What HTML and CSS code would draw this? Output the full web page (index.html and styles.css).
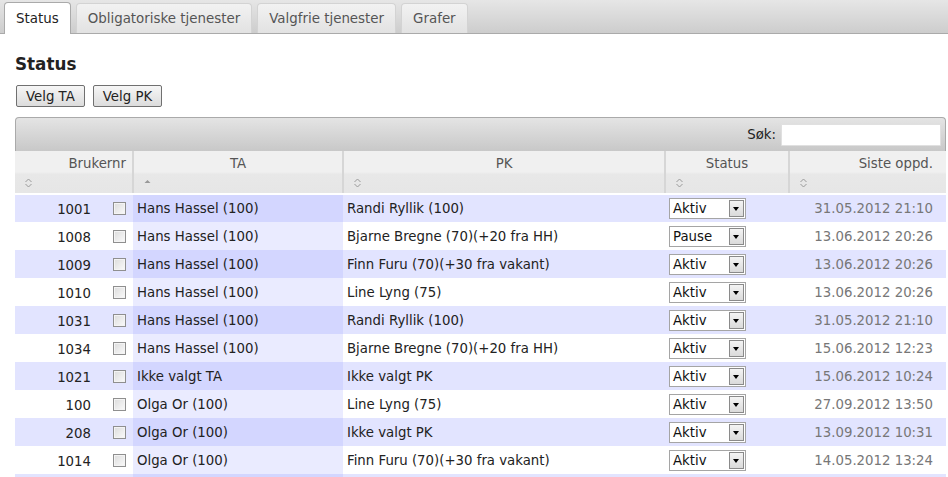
FILE: index.html
```html
<!DOCTYPE html>
<html>
<head>
<meta charset="utf-8">
<link rel="stylesheet" href="styles.css">
</head>
<body>
<div class="tabbar">
  <div class="tab active">Status</div>
  <div class="tab">Obligatoriske tjenester</div>
  <div class="tab">Valgfrie tjenester</div>
  <div class="tab">Grafer</div>
</div>
<div class="content">
  <h2 class="title">Status</h2>
  <div class="buttons">
    <button class="btn">Velg TA</button>
    <button class="btn">Velg PK</button>
  </div>
  <div class="toolbar">
    <label class="search">Søk: <span class="search-input"></span></label>
  </div>
  <table class="grid">
    <colgroup>
      <col class="c1"><col class="c2"><col class="c3"><col class="c4"><col class="c5">
    </colgroup>
    <thead>
      <tr>
        <th class="right"><div class="lbl">Brukernr</div><div class="ico"><svg width="7" height="10" viewBox="0 0 7 10"><path d="M0.5 4 L3.5 1 L6.5 4 M0.5 6 L3.5 9 L6.5 6" fill="none" stroke="#999" stroke-width="1"/></svg></div></th>
        <th class="center"><div class="lbl">TA</div><div class="ico"><svg width="7" height="10" viewBox="0 0 7 10"><path d="M0.5 5 L3.5 2 L6.5 5 Z" fill="#999"/></svg></div></th>
        <th class="center"><div class="lbl">PK</div><div class="ico"><svg width="7" height="10" viewBox="0 0 7 10"><path d="M0.5 4 L3.5 1 L6.5 4 M0.5 6 L3.5 9 L6.5 6" fill="none" stroke="#999" stroke-width="1"/></svg></div></th>
        <th class="center"><div class="lbl">Status</div><div class="ico"><svg width="7" height="10" viewBox="0 0 7 10"><path d="M0.5 4 L3.5 1 L6.5 4 M0.5 6 L3.5 9 L6.5 6" fill="none" stroke="#999" stroke-width="1"/></svg></div></th>
        <th class="right last"><div class="lbl">Siste oppd.</div><div class="ico"><svg width="7" height="10" viewBox="0 0 7 10"><path d="M0.5 4 L3.5 1 L6.5 4 M0.5 6 L3.5 9 L6.5 6" fill="none" stroke="#999" stroke-width="1"/></svg></div></th>
      </tr>
    </thead>
    <tbody>
      <tr class="odd"><td class="num"><span>1001</span><i class="cb"></i></td><td class="sorted">Hans Hassel (100)</td><td>Randi Ryllik (100)</td><td><span class="sel">Aktiv<b class="arr"></b></span></td><td class="date">31.05.2012 21:10</td></tr>
      <tr class="even"><td class="num"><span>1008</span><i class="cb"></i></td><td class="sorted">Hans Hassel (100)</td><td>Bjarne Bregne (70)(+20 fra HH)</td><td><span class="sel">Pause<b class="arr"></b></span></td><td class="date">13.06.2012 20:26</td></tr>
      <tr class="odd"><td class="num"><span>1009</span><i class="cb"></i></td><td class="sorted">Hans Hassel (100)</td><td>Finn Furu (70)(+30 fra vakant)</td><td><span class="sel">Aktiv<b class="arr"></b></span></td><td class="date">13.06.2012 20:26</td></tr>
      <tr class="even"><td class="num"><span>1010</span><i class="cb"></i></td><td class="sorted">Hans Hassel (100)</td><td>Line Lyng (75)</td><td><span class="sel">Aktiv<b class="arr"></b></span></td><td class="date">13.06.2012 20:26</td></tr>
      <tr class="odd"><td class="num"><span>1031</span><i class="cb"></i></td><td class="sorted">Hans Hassel (100)</td><td>Randi Ryllik (100)</td><td><span class="sel">Aktiv<b class="arr"></b></span></td><td class="date">31.05.2012 21:10</td></tr>
      <tr class="even"><td class="num"><span>1034</span><i class="cb"></i></td><td class="sorted">Hans Hassel (100)</td><td>Bjarne Bregne (70)(+20 fra HH)</td><td><span class="sel">Aktiv<b class="arr"></b></span></td><td class="date">15.06.2012 12:23</td></tr>
      <tr class="odd"><td class="num"><span>1021</span><i class="cb"></i></td><td class="sorted">Ikke valgt TA</td><td>Ikke valgt PK</td><td><span class="sel">Aktiv<b class="arr"></b></span></td><td class="date">15.06.2012 10:24</td></tr>
      <tr class="even"><td class="num"><span>100</span><i class="cb"></i></td><td class="sorted">Olga Or (100)</td><td>Line Lyng (75)</td><td><span class="sel">Aktiv<b class="arr"></b></span></td><td class="date">27.09.2012 13:50</td></tr>
      <tr class="odd"><td class="num"><span>208</span><i class="cb"></i></td><td class="sorted">Olga Or (100)</td><td>Ikke valgt PK</td><td><span class="sel">Aktiv<b class="arr"></b></span></td><td class="date">13.09.2012 10:31</td></tr>
      <tr class="even"><td class="num"><span>1014</span><i class="cb"></i></td><td class="sorted">Olga Or (100)</td><td>Finn Furu (70)(+30 fra vakant)</td><td><span class="sel">Aktiv<b class="arr"></b></span></td><td class="date">14.05.2012 13:24</td></tr>
      <tr class="odd"><td class="num"><span></span></td><td class="sorted"></td><td></td><td></td><td class="date"></td></tr>
    </tbody>
  </table>
</div>
</body>
</html>
```

FILE: styles.css
```css
html, body {
  margin: 0;
  padding: 0;
  background: #fff;
  font-family: "DejaVu Sans", Verdana, sans-serif;
  font-size: 13.3px;
  color: #222;
  overflow: hidden;
}

.tabbar {
  height: 34px;
  box-sizing: border-box;
  background: linear-gradient(#e6e6e6, #cdcdcd);
  border-bottom: 1px solid #aaa;
  display: flex;
  align-items: flex-end;
  padding-left: 4px;
  gap: 5px;
}

.tab {
  height: 30px;
  box-sizing: border-box;
  padding: 0 11px;
  display: flex;
  align-items: center;
  font-size: 13.4px;
  color: #555;
  background: linear-gradient(#f2f2f2, #e2e2e2);
  border: 1px solid #d3d3d3;
  border-bottom: none;
  border-radius: 4px 4px 0 0;
  margin-bottom: 0;
}

.tab.active {
  height: 32px;
  margin-bottom: -1px;
  background: #fff;
  color: #222;
  border-color: #aaa;
}

.content {
  padding: 0 2px 0 15px;
}

.title {
  margin: 20px 0 0 0;
  font-size: 16.8px;
  font-weight: bold;
  color: #222;
  height: 21px;
  line-height: 21px;
}

.buttons {
  display: flex;
  gap: 8px;
  margin-top: 10px;
  padding-left: 1px;
}

.btn {
  height: 22px;
  padding: 0 9px;
  font-family: "DejaVu Sans", Verdana, sans-serif;
  font-size: 13.3px;
  color: #222;
  background: linear-gradient(#f6f6f6, #dcdcdc);
  border: 1px solid #707070;
  border-radius: 2px;
}

.toolbar {
  margin-top: 10px;
  height: 34px;
  box-sizing: border-box;
  background: linear-gradient(#e4e4e4, #c8c8c8);
  border: 1px solid #aaa;
  border-bottom: none;
  border-radius: 4px 4px 0 0;
  display: flex;
  align-items: center;
  justify-content: flex-end;
  padding-right: 4px;
}

.search {
  display: flex;
  align-items: center;
  gap: 5px;
  color: #222;
}

.search-input {
  width: 158px;
  height: 20px;
  background: #fff;
  border: 1px solid #e0e0e0;
  border-radius: 1px;
}

.grid {
  width: 100%;
  border-collapse: collapse;
  table-layout: fixed;
}

.c1 { width: 118px; }
.c2 { width: 210px; }
.c3 { width: 322px; }
.c4 { width: 124px; }
.c5 { width: auto; }

.grid th {
  padding: 0;
  font-weight: normal;
  color: #555;
  background: linear-gradient(#f0f0f0 0, #f0f0f0 50%, #e8e8e8 55%, #e6e6e6 100%);
  border-right: 2px solid #d6d6d6;
  border-bottom: 2px solid #fff;
  height: 42px;
  vertical-align: top;
}

.grid th.last { border-right: none; }

.lbl {
  height: 22px;
  line-height: 26px;
  padding: 0 6px 0 13px;
}

.right .lbl { text-align: right; }
.center .lbl { text-align: center; padding: 0; }
.last .lbl { padding-right: 13px; }

.ico {
  height: 20px;
  text-align: left;
  padding-left: 10px;
  display: flex;
  align-items: center;
}

.grid td {
  height: 28px;
  padding: 0 4px;
  box-sizing: border-box;
  color: #222;
  white-space: nowrap;
  overflow: hidden;
  vertical-align: middle;
}

.odd td { background: #e2e4ff; }
.even td { background: #fff; }
.odd td.sorted { background: #d3d6ff; }
.even td.sorted { background: #eaebff; }

.num {
  text-align: right;
}

.grid td.num {
  padding-right: 7px;
}

.num span {
  display: inline-block;
  vertical-align: middle;
  position: relative;
  top: 1px;
}

.cb {
  display: inline-block;
  vertical-align: middle;
  width: 13px;
  height: 13px;
  box-sizing: border-box;
  margin-left: 22px;
  border: 1px solid #8f8f8f;
  background: linear-gradient(135deg, #dcdcdc, #fafafa);
  box-shadow: inset 0 0 0 1px #f4f4f4;
}

.sel {
  display: inline-flex;
  align-items: center;
  justify-content: space-between;
  width: 77px;
  height: 21px;
  box-sizing: border-box;
  background: #fff;
  border: 1px solid #a5a5a5;
  padding-left: 3px;
  color: #111;
}

.arr {
  width: 15px;
  height: 17px;
  box-sizing: border-box;
  margin-right: 1px;
  border: 1px solid #8a8a8a;
  background: linear-gradient(#f4f4f4, #dadada);
  position: relative;
}

.arr::after {
  content: "";
  position: absolute;
  left: 3px;
  top: 6px;
  border-left: 3.5px solid transparent;
  border-right: 3.5px solid transparent;
  border-top: 4px solid #000;
}

.grid td.date {
  text-align: right;
  color: #777;
  padding-right: 13px;
}
```
